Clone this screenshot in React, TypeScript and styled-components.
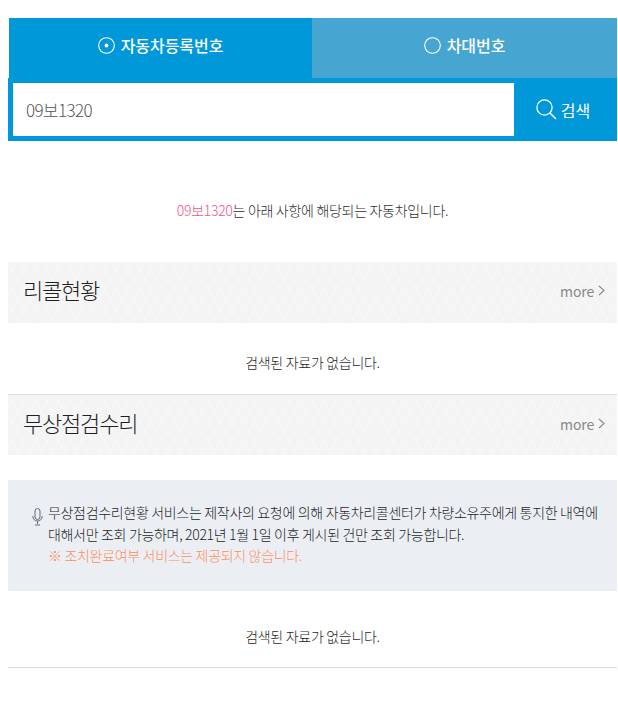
import React from "react";
import styled, { createGlobalStyle } from "styled-components";

const Global = createGlobalStyle`
  html, body { margin: 0; padding: 0; background: #fff; }
  body { font-family: "Noto Sans CJK KR", "Noto Sans", sans-serif; color: #333; }
`;
const Page = styled.div`
  width: 609px;
  margin-left: 8px;
  padding-top: 18px;
  height: 697px;
`;
const Tabs = styled.div`
  display: grid;
  grid-template-columns: 303px 305px;
  height: 60px;
  margin-left: 1px;
`;
const Tab = styled.div<{ $active?: boolean }>`
  display: flex;
  align-items: center;
  justify-content: center;
  gap: 6px;
  box-sizing: border-box;
  padding-bottom: 6px;
  background: ${(p) => (p.$active ? "#0098d9" : "#47a5d1")};
  color: #fff;
  font-size: 16px;
  font-weight: 500;
  letter-spacing: -0.05px;
`;
const SearchBox = styled.div`
  display: flex;
  height: 63px;
  box-sizing: border-box;
  border: 5px solid #0098d9;
  background: #0098d9;
`;
const Input = styled.div`
  flex: 1;
  background: #fff;
  display: flex;
  align-items: center;
  padding-left: 13px;
  font-size: 17px;
  font-weight: 300;
  letter-spacing: -0.6px;
  color: #555;
`;
const SearchBtn = styled.div`
  width: 98px;
  display: flex;
  align-items: center;
  justify-content: center;
  gap: 4px;
  color: #fff;
  font-size: 16px;
  font-weight: 400;
`;
const Notice = styled.p`
  margin: 56px 0 0;
  text-align: center;
  font-size: 14px;
  font-weight: 300;
  line-height: 26px;
  letter-spacing: -0.3px;
  color: #2e2e2e;
  height: 26px;
`;
const Pink = styled.span`
  color: #f0557f;
`;
const SectionHead = styled.div<{ $gap: number; $rule?: boolean }>`
  margin-top: ${(p) => p.$gap}px;
  display: flex;
  align-items: center;
  justify-content: space-between;
  box-sizing: border-box;
  height: 61px;
  padding: 0 12px ${(p) => (p.$rule ? 3 : 4)}px 15px;
  border-top: ${(p) => (p.$rule ? "1px solid #ddd" : "none")};
  background-color: #f4f4f4;
  background-image:
    repeating-linear-gradient(60deg, rgba(255, 255, 255, 0.3) 0 1px, transparent 1px 10px),
    repeating-linear-gradient(-60deg, rgba(255, 255, 255, 0.3) 0 1px, transparent 1px 10px);
`;
const SectionTitle = styled.h2`
  margin: 0 0 3px;
  font-size: 22px;
  font-weight: 300;
  letter-spacing: -1.2px;
  color: #1f1f1f;
`;
const More = styled.span`
  display: flex;
  align-items: center;
  gap: 4px;
  font-size: 14px;
  font-weight: 400;
  color: #888;
  letter-spacing: -0.15px;
`;
const Empty = styled.div<{ $h: number; $pad: number; $line?: boolean }>`
  height: ${(p) => p.$h}px;
  box-sizing: border-box;
  padding-top: ${(p) => p.$pad}px;
  display: flex;
  align-items: center;
  justify-content: center;
  font-size: 14px;
  font-weight: 300;
  letter-spacing: -0.3px;
  color: #1f1f1f;
  border-bottom: ${(p) => (p.$line ? "1px solid #ddd" : "none")};
`;
const InfoBox = styled.div`
  margin-top: 25px;
  height: 111px;
  box-sizing: border-box;
  background: #ebeff4;
  padding: 22px 16px 0 24px;
  display: flex;
  gap: 5px;
  font-size: 14px;
  font-weight: 300;
  line-height: 21.5px;
  letter-spacing: -0.32px;
  color: #1f1f1f;
`;
const InfoIcon = styled.svg`
  flex: none;
  margin-top: 6px;
`;
const Warn = styled.span`
  color: #fb8f5e;
`;

const Radio = ({ on }: { on?: boolean }) => (
  <svg width="17" height="17" viewBox="0 0 17 17" fill="none">
    <circle cx="8.5" cy="8.5" r="7.8" stroke="#fff" strokeWidth="1.1" />
    {on && <circle cx="8.5" cy="8.5" r="1.9" fill="#fff" />}
  </svg>
);
const Chevron = () => (
  <svg width="7" height="11" viewBox="0 0 7 11" fill="none">
    <path d="M1 1l5 4.5L1 10" stroke="#888" strokeWidth="1.1" />
  </svg>
);

export default function App() {
  return (
    <Page>
      <Global />
      <Tabs>
        <Tab $active><Radio on />자동차등록번호</Tab>
        <Tab><Radio />차대번호</Tab>
      </Tabs>
      <SearchBox>
        <Input>09보1320</Input>
        <SearchBtn>
          <svg width="21" height="21" viewBox="0 0 21 21" fill="none">
            <circle cx="8.5" cy="8.5" r="7.6" stroke="#fff" strokeWidth="1.3" />
            <path d="M14 14l6 6" stroke="#fff" strokeWidth="1.6" />
          </svg>
          검색
        </SearchBtn>
      </SearchBox>
      <Notice><Pink>09보1320</Pink>는 아래 사항에 해당되는 자동차입니다.</Notice>
      <SectionHead $gap={39}>
        <SectionTitle>리콜현황</SectionTitle>
        <More>more<Chevron /></More>
      </SectionHead>
      <Empty $h={71} $pad={6}>검색된 자료가 없습니다.</Empty>
      <SectionHead $gap={0} $rule>
        <SectionTitle>무상점검수리</SectionTitle>
        <More>more<Chevron /></More>
      </SectionHead>
      <InfoBox>
        <InfoIcon width="11" height="18" viewBox="0 0 11 18" fill="none" stroke="#667">
          <rect x="3" y="0.5" width="5" height="11" rx="2.5" />
          <path d="M0.8 8c0 3 2 5 4.7 5s4.7-2 4.7-5M5.5 13v3M3 17h5" />
        </InfoIcon>
        <div>
          무상점검수리현황 서비스는 제작사의 요청에 의해 자동차리콜센터가 차량소유주에게 통지한 내역에 대해서만 조회 가능하며, 2021년 1월 1일 이후 게시된 건만 조회 가능합니다.
          <br />
          <Warn>※ 조치완료여부 서비스는 제공되지 않습니다.</Warn>
        </div>
      </InfoBox>
      <Empty $h={77} $pad={14} $line>검색된 자료가 없습니다.</Empty>
    </Page>
  );
}
